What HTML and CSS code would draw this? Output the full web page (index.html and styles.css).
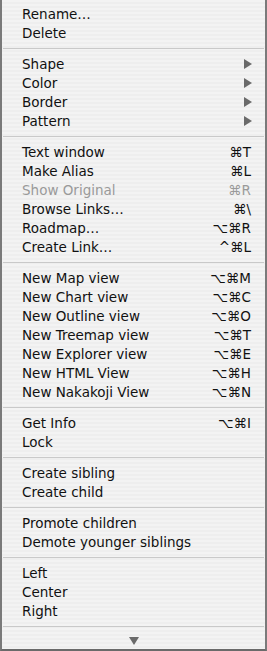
FILE: index.html
```html
<!DOCTYPE html>
<html lang="en">
<head>
  <meta charset="UTF-8">
  <meta name="viewport" content="width=device-width, initial-scale=1">
  <title>Context Menu</title>
  <link rel="stylesheet" href="styles.css">
</head>

<body>

<div class="menu">

  <div class="item">Rename…</div>
  <div class="item">Delete</div>

  <div class="sep"></div>

  <div class="item">Shape <span class="sub"></span></div>
  <div class="item">Color <span class="sub"></span></div>
  <div class="item">Border <span class="sub"></span></div>
  <div class="item">Pattern <span class="sub"></span></div>

  <div class="sep"></div>

  <div class="item">Text window <span class="key">⌘T</span></div>
  <div class="item">Make Alias <span class="key">⌘L</span></div>
  <div class="item disabled">Show Original <span class="key">⌘R</span></div>
  <div class="item">Browse Links… <span class="key">⌘\</span></div>
  <div class="item">Roadmap… <span class="key">⌥⌘R</span></div>
  <div class="item">Create Link… <span class="key">^⌘L</span></div>

  <div class="sep"></div>

  <div class="item">New Map view <span class="key">⌥⌘M</span></div>
  <div class="item">New Chart view <span class="key">⌥⌘C</span></div>
  <div class="item">New Outline view <span class="key">⌥⌘O</span></div>
  <div class="item">New Treemap view <span class="key">⌥⌘T</span></div>
  <div class="item">New Explorer view <span class="key">⌥⌘E</span></div>
  <div class="item">New HTML View <span class="key">⌥⌘H</span></div>
  <div class="item">New Nakakoji View <span class="key">⌥⌘N</span></div>

  <div class="sep"></div>

  <div class="item">Get Info <span class="key">⌥⌘I</span></div>
  <div class="item">Lock</div>

  <div class="sep"></div>

  <div class="item">Create sibling</div>
  <div class="item">Create child</div>

  <div class="sep"></div>

  <div class="item">Promote children</div>
  <div class="item">Demote younger siblings</div>

  <div class="sep"></div>

  <div class="item">Left</div>
  <div class="item">Center</div>
  <div class="item">Right</div>

  <div class="sep"></div>

  <!-- scroll indicator -->
  <div class="more"><span class="down"></span></div>

</div>

</body>
</html>
```

FILE: styles.css
```css
* {
  box-sizing: border-box;
  padding: 0;
  margin: 0;
}

body {
  font-family: "DejaVu Sans", "Liberation Sans", sans-serif;
  background: #fff;
}

.menu {
  width: 267px;
  height: 651px;
  padding-top: 4px;
  border-left: 2px solid #7a7a7a;
  border-right: 2px solid #7a7a7a;
  border-bottom: 2px solid #6a6a6a;
  background: repeating-linear-gradient(#f3f3f3 0 2px, #eeeeee 2px 4px);
}

.item {
  display: flex;
  justify-content: space-between;
  align-items: center;
  height: 19px;
  padding: 0 14px 0 20px;
  font-size: 13.5px;
  color: #111;
}

.item.disabled {
  color: #9a9a9a;
}

.key {
  font-size: 13.5px;
}

.sub {
  width: 0;
  height: 0;
  margin-right: -1px;
  border-top: 5px solid transparent;
  border-bottom: 5px solid transparent;
  border-left: 8px solid #6a6a6a;
}

.sep {
  height: 12px;
  display: flex;
  align-items: center;
  padding: 0 1px;
}

.sep::before {
  content: "";
  flex: 1;
  height: 1px;
  background: #c9c9c9;
}

.more {
  height: 17px;
  display: flex;
  justify-content: center;
  align-items: center;
}

.down {
  width: 0;
  height: 0;
  border-left: 5px solid transparent;
  border-right: 5px solid transparent;
  border-top: 8px solid #6a6a6a;
}
```
